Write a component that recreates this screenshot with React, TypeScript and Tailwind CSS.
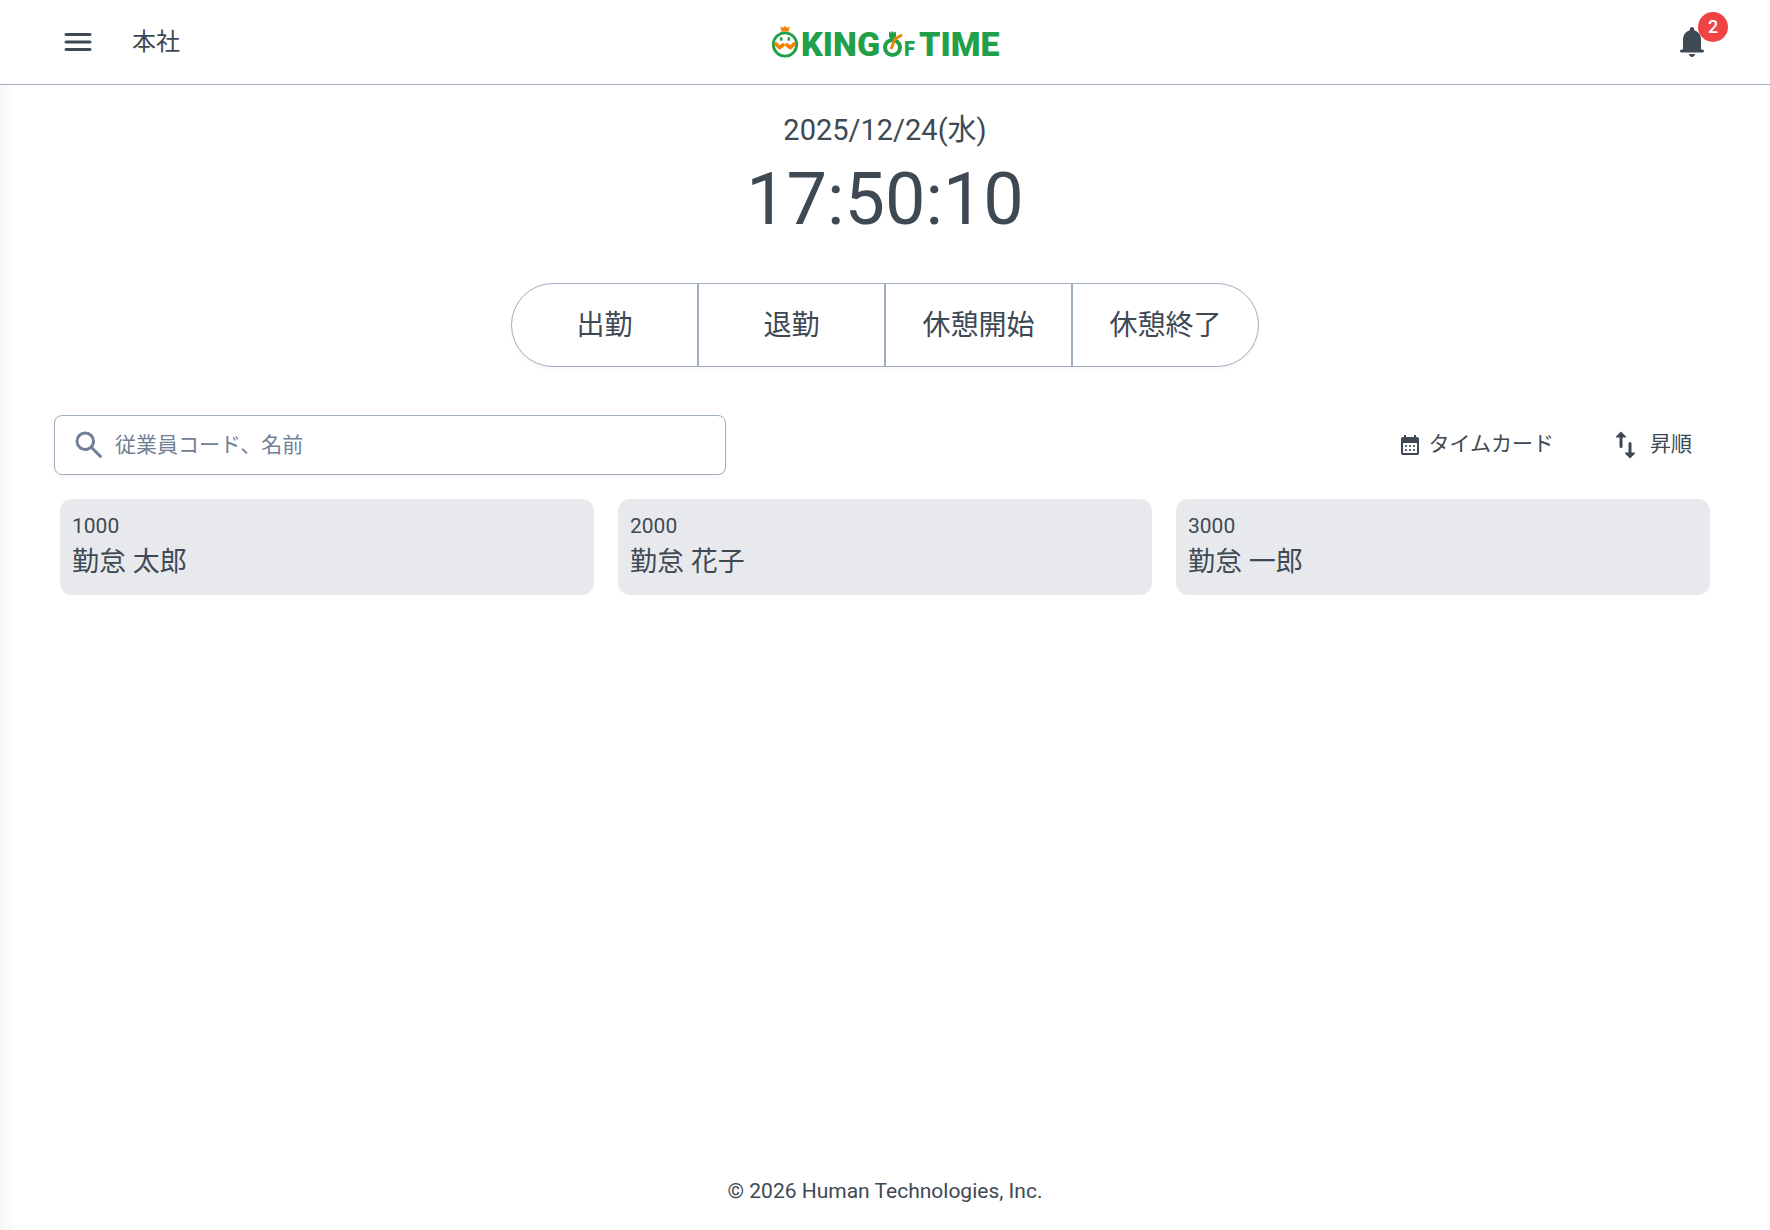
import { useState } from "react";

const PUNCH_BUTTONS = ["出勤", "退勤", "休憩開始", "休憩終了"];

const EMPLOYEES = [
  { code: "1000", name: "勤怠 太郎" },
  { code: "2000", name: "勤怠 花子" },
  { code: "3000", name: "勤怠 一郎" },
];

function Logo() {
  return (
    <svg width="232" height="48" viewBox="-1 -4 232 48" role="img" aria-label="KING OF TIME">
      {/* face with crown */}
      <circle cx="15" cy="22.500" r="11.700" fill="none" stroke="#21a049" strokeWidth="2.800" />
      <path d="M10.500 4.500l2.500 1.300 2-1.800 2 1.800 2.500-1.300-.8 5h-7.400z" fill="#f08300" />
      <ellipse cx="11.200" cy="17" rx="1.400" ry="1.900" fill="#21a049" />
      <ellipse cx="18.800" cy="17" rx="1.400" ry="1.900" fill="#21a049" />
      <path
        d="M6 22l3.700 3.600 3.300-2.600M24 22l-3.700 3.600-3.300-2.600"
        fill="none"
        stroke="#f08300"
        strokeWidth="3.800"
        strokeLinejoin="round"
        strokeLinecap="round"
      />
      <g fill="#21a049" fontFamily="Roboto, sans-serif" fontWeight="900">
        <text x="31" y="34" fontSize="34">KING</text>
        <text x="134" y="34" fontSize="20">F</text>
        <text x="149" y="34" fontSize="34">TIME</text>
      </g>
      {/* stopwatch standing in for the O */}
      <circle cx="122.500" cy="25.500" r="7.500" fill="none" stroke="#21a049" strokeWidth="4" />
      <path d="M119 9.500l2 1.300 1.500-1.800 1.500 1.800 2-1.300v5l-1.500 3h-4l-1.500-3z" fill="#21a049" />
      <path
        d="M121.500 26l3.500-9 6-3.500"
        fill="none"
        stroke="#f08300"
        strokeWidth="2.800"
        strokeLinecap="round"
        strokeLinejoin="round"
      />
    </svg>
  );
}

export default function App() {
  const [query, setQuery] = useState("");

  return (
    <div className="flex min-h-screen flex-col bg-white font-['Roboto','Noto_Sans_CJK_JP',sans-serif] text-[#3e4954]">
      <header className="grid grid-cols-3 items-center border-b border-[#a0aec0] bg-white px-[60px] shadow-[0_2px_4px_rgba(0,0,0,0.04)]">
        <div className="flex h-[84px] items-center gap-9">
          <button aria-label="メニュー">
            <svg width="36" height="36" viewBox="0 -960 960 960" fill="currentColor">
              <path d="M160-240q-17 0-28.500-11.500T120-280q0-17 11.500-28.500T160-320h640q17 0 28.500 11.500T840-280q0 17-11.500 28.500T800-240H160Zm0-200q-17 0-28.500-11.500T120-480q0-17 11.500-28.500T160-520h640q17 0 28.500 11.500T840-480q0 17-11.500 28.500T800-440H160Zm0-200q-17 0-28.500-11.500T120-680q0-17 11.500-28.500T160-720h640q17 0 28.500 11.500T840-680q0 17-11.500 28.500T800-640H160Z" />
            </svg>
          </button>
          <span className="text-2xl">本社</span>
        </div>
        <div className="flex justify-center">
          <Logo />
        </div>
        <button className="relative justify-self-end" aria-label="お知らせ 2件">
          <svg width="36" height="36" viewBox="0 -960 960 960" fill="currentColor">
            <path d="M200-200q-17 0-28.500-11.500T160-240q0-17 11.500-28.500T200-280h40v-280q0-83 50-147.500T420-792v-28q0-25 17.500-42.500T480-880q25 0 42.500 17.500T540-820v28q80 20 130 84.500T720-560v280h40q17 0 28.500 11.500T800-240q0 17-11.500 28.500T760-200H200Zm280 120q-33 0-56.500-23.500T400-160h160q0 33-23.500 56.500T480-80Z" />
          </svg>
          <span className="absolute -top-3 left-6 flex size-[30px] items-center justify-center rounded-full bg-[#f04444] text-lg font-medium text-white">
            2
          </span>
        </button>
      </header>

      <main className="flex-1 bg-linear-to-r from-[#f6f6f6] to-white to-[16px]">
        <section className="flex flex-col items-center pt-6">
          <p className="text-[29px] leading-[42px]">2025/12/24(水)</p>
          <p className="text-[72px] leading-[98px]">17:50:10</p>
          <div className="mt-[34px] flex h-[84px] w-[748px] divide-x-2 divide-[#a0aec0] overflow-hidden rounded-full border border-[#a0aec0] bg-white shadow-[0_2px_4px_rgba(0,0,0,0.04)]">
            {PUNCH_BUTTONS.map((label) => (
              <button key={label} className="flex-1 pt-[2px] text-[28px]">
                {label}
              </button>
            ))}
          </div>
        </section>

        <section className="mt-12 px-[54px]">
          <div className="flex items-center justify-between">
            <label className="flex h-[60px] w-[672px] items-center gap-2 rounded-lg border border-[#a0aec0] bg-white px-4 text-[#718096] shadow-[0_2px_4px_rgba(0,0,0,0.04)]">
              <svg width="36" height="36" viewBox="0 -960 960 960" fill="currentColor" aria-hidden="true">
                <path d="M380-320q-109 0-184.500-75.500T120-580q0-109 75.500-184.500T380-840q109 0 184.500 75.500T640-580q0 44-14 83t-38 69l224 224q11 11 11 28t-11 28q-11 11-28 11t-28-11L532-372q-30 24-69 38t-83 14Zm0-80q75 0 127.500-52.500T560-580q0-75-52.500-127.500T380-760q-75 0-127.500 52.500T200-580q0 75 52.500 127.500T380-400Z" />
              </svg>
              <input
                type="text"
                value={query}
                onChange={(e) => setQuery(e.target.value)}
                aria-label="従業員コード、名前"
                placeholder="従業員コード、名前"
                className="min-w-0 flex-1 pt-[2px] text-[21px] outline-none placeholder:text-[#718096]"
              />
            </label>
            <div className="flex items-center gap-[54px] pr-6 text-[21px]">
              <button className="flex items-center gap-[6px]">
                <svg width="24" height="24" viewBox="0 -960 960 960" fill="currentColor" aria-hidden="true">
                  <path d="M200-80q-33 0-56.500-23.500T120-160v-560q0-33 23.500-56.500T200-800h40v-80h80v80h320v-80h80v80h40q33 0 56.500 23.500T840-720v560q0 33-23.500 56.500T760-80H200Zm0-80h560v-400H200v400Zm280-240q-17 0-28.500-11.500T440-440q0-17 11.500-28.500T480-480q17 0 28.500 11.500T520-440q0 17-11.500 28.500T480-400Zm-160 0q-17 0-28.500-11.500T280-440q0-17 11.500-28.500T320-480q17 0 28.500 11.500T360-440q0 17-11.500 28.500T320-400Zm320 0q-17 0-28.500-11.500T600-440q0-17 11.500-28.500T640-480q17 0 28.500 11.500T680-440q0 17-11.500 28.500T640-400ZM480-240q-17 0-28.500-11.500T440-280q0-17 11.500-28.500T480-320q17 0 28.500 11.500T520-280q0 17-11.500 28.500T480-240Zm-160 0q-17 0-28.500-11.500T280-280q0-17 11.500-28.500T320-320q17 0 28.500 11.500T360-280q0 17-11.500 28.500T320-240Zm320 0q-17 0-28.500-11.500T600-280q0-17 11.500-28.500T640-320q17 0 28.500 11.500T680-280q0 17-11.500 28.500T640-240Z" />
                </svg>
                タイムカード
              </button>
              <button className="flex items-center gap-[6px]">
                <svg width="36" height="36" viewBox="0 0 36 36" fill="currentColor" aria-hidden="true">
                  <path d="M13 4.500l5 5q.5 1-.5 1h-3v9q0 1.500-1.500 1.500t-1.500-1.500v-9h-3q-1 0-.5-1zM22 31.500l-5-5q-.5-1 .5-1h3v-9q0-1.500 1.500-1.500t1.500 1.500v9h3q1 0 .5 1z" />
                </svg>
                昇順
              </button>
            </div>
          </div>

          <ul className="mt-6 grid grid-cols-3 gap-6 px-[6px]">
            {EMPLOYEES.map(({ code, name }) => (
              <li key={code}>
                <button className="flex h-24 w-full flex-col rounded-xl bg-[#e8e9ed] p-3 text-left">
                  <span className="text-[21px] leading-[30px]">{code}</span>
                  <span className="text-[27px] leading-[42px]">{name}</span>
                </button>
              </li>
            ))}
          </ul>
        </section>
      </main>

      <footer className="bg-linear-to-r from-[#f6f6f6] to-white to-[16px] pb-6 text-center text-[21px] leading-[30px]">
        © 2026 Human Technologies, Inc.
      </footer>
    </div>
  );
}
